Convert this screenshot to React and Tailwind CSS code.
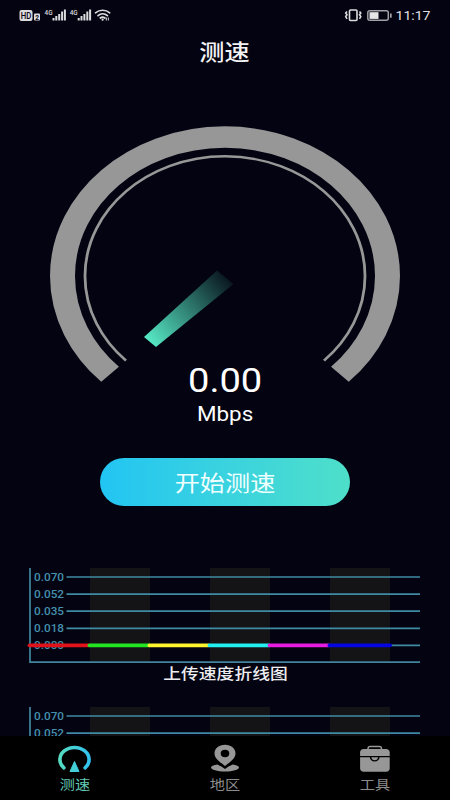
const segments = [
  { x1: 30, x2: 89, color: "#e0121a" },
  { x1: 90, x2: 149, color: "#22e622" },
  { x1: 150, x2: 209, color: "#fff42e" },
  { x1: 210, x2: 269, color: "#22f0f0" },
  { x1: 270, x2: 329, color: "#e61ce0" },
  { x1: 330, x2: 390, color: "#0505e0" },
];

const ticks = ["0.070", "0.052", "0.035", "0.018", "0.000"];

function SignalBars({ x }) {
  return (
    <g fill="#dcdcdf">
      <text x={x} y="14.500" fontSize="7.500" fontWeight="500" textLength="8" lengthAdjust="spacingAndGlyphs">4G</text>
      <rect x={x + 8} y="18" width="2" height="2.5" />
      <rect x={x + 10.8} y="16" width="2" height="4.5" />
      <rect x={x + 13.7} y="14" width="2" height="6.5" />
      <rect x={x + 16.6} y="11.5" width="2" height="9" />
      <rect x={x + 19.4} y="9.5" width="2" height="11" />
    </g>
  );
}

function StatusBar() {
  return (
    <div className="h-[30px] shrink-0">
      <svg width="450" height="30" viewBox="0 0 450 30" fontFamily="Roboto, sans-serif">
        <rect x="19.5" y="10" width="13" height="11" rx="2" fill="#dcdcdf" />
        <text x="20.7" y="18.5" fontSize="8.5" fontWeight="500" fill="#050512" textLength="10.6" lengthAdjust="spacingAndGlyphs">HD</text>
        <rect x="34" y="13.5" width="6" height="7" rx="1" fill="#dcdcdf" />
        <text x="35.2" y="19.6" fontSize="6.5" fontWeight="700" fill="#050512">2</text>
        <SignalBars x={44.5} />
        <SignalBars x={69.7} />
        <g fill="none" stroke="#dcdcdf" strokeWidth="1.7" strokeLinecap="round">
          <path d="M95.5 12.8c4-3.4 10.3-3.4 14.2 0" />
          <path d="M98 15.6c2.7-2.3 6.7-2.3 9.4 0" />
          <path d="M100.3 18c1.4-1.2 3.2-1.2 4.6 0" />
        </g>
        <circle cx="102.6" cy="19.7" r="1.1" fill="#dcdcdf" />
        <path d="M106.3 17.5v3M108.3 17.5v3" stroke="#dcdcdf" strokeWidth="1" />
        <g fill="none" stroke="#dcdcdf" strokeWidth="1.6">
          <rect x="349.5" y="10" width="7.5" height="10.5" rx="1" />
          <path d="M347 11.500l-1.3 1.5 1.3 1.8-1.3 1.8 1.3 2.2M359.5 11.500l1.3 1.5-1.3 1.8 1.3 1.8-1.3 2.2" />
        </g>
        <rect x="367.8" y="10.8" width="20.5" height="9.5" rx="2" fill="none" stroke="#a0a0a6" strokeWidth="1.5" />
        <rect x="369.5" y="12.2" width="9" height="6.7" fill="#e6e6e8" />
        <path d="M390 13.500h1.7v4.200h-1.7z" fill="#a0a0a6" />
        <text x="395.5" y="20" fontSize="13.500" fill="#e0e0e3" textLength="35" lengthAdjust="spacingAndGlyphs">11:17</text>
      </svg>
    </div>
  );
}

function Gauge() {
  return (
    <svg className="shrink-0" width="350" height="262" viewBox="50 124 350 262">
      <defs>
        <linearGradient id="needle" gradientUnits="userSpaceOnUse" x1="150" y1="342" x2="228" y2="278">
          <stop offset="0" stopColor="#56e8c4" />
          <stop offset="1" stopColor="#56e8c4" stopOpacity="0.08" />
        </linearGradient>
      </defs>
      <g transform="translate(225 276) scale(1 0.855)" fill="none" stroke="#979797">
        <path d="M-114.9 114.9A162.5 162.5 0 1 1 114.9 114.9" strokeWidth="25" />
        <path d="M-99 99A140 140 0 1 1 99 99" strokeWidth="2.8" />
      </g>
      <path d="M144 337L156 347L233.5 284L217 270.5Z" fill="url(#needle)" />
    </svg>
  );
}

function SpeedChart({ title }) {
  return (
    <div className="flex h-[139px] shrink-0 flex-col items-center">
      <svg className="shrink-0" width="450" height="96" viewBox="0 0 450 96">
        {[90, 210, 330].map((x) => (
          <rect key={x} x={x} y="0" width="60" height="93" fill="#141417" />
        ))}
        <path d="M30 0V94.2H420" fill="none" stroke="#41869d" strokeWidth="1.7" />
        {ticks.map((tick, i) => (
          <g key={tick}>
            <path d={`M${i === 4 ? 30 : 66.5} ${9 + i * 17.1}H420`} stroke="#3f8ba3" strokeWidth="1.7" />
            <text
              x="34"
              y={13 + i * 17.1}
              fontSize="11.5"
              fontWeight="500"
              fontFamily="Roboto, sans-serif"
              fill="#4590ad"
              textLength="30"
              lengthAdjust="spacingAndGlyphs"
            >
              {tick}
            </text>
          </g>
        ))}
        {segments.map((s) => (
          <path key={s.x1} d={`M${s.x1 - 0.5} 77.3H${s.x2}`} stroke={s.color} strokeWidth="3.8" strokeLinecap="round" />
        ))}
      </svg>
      <p className="ml-[2px] scale-x-[1.185] text-[15px] font-medium leading-[21px] text-[#ededf0]">{title}</p>
    </div>
  );
}

function SpeedIcon() {
  return (
    <svg width="36" height="30" viewBox="57 744 36 30">
      <defs>
        <linearGradient id="speed" x1="58" y1="0" x2="91" y2="0" gradientUnits="userSpaceOnUse">
          <stop offset="0" stopColor="#58dcc0" />
          <stop offset="1" stopColor="#2fc0f0" />
        </linearGradient>
      </defs>
      <path d="M63.9 767.9A14.6 12.1 0 1 1 85.1 767.9" fill="none" stroke="url(#speed)" strokeWidth="3.6" strokeLinecap="round" />
      <path d="M74.5 761.5L79 771.5H70Z" fill="url(#speed)" stroke="url(#speed)" strokeLinejoin="round" />
    </svg>
  );
}

function RegionIcon() {
  return (
    <svg width="36" height="30" viewBox="207 744 36 30" fill="#979797">
      <path fillRule="evenodd" d="M225 744.8c-6.200 0-10.5 3.7-10.5 8.600 0 5.2 6 8.800 10.500 12.600 4.500-3.800 10.500-7.400 10.500-12.600 0-4.900-4.300-8.600-10.500-8.600zm0 5a4.300 3.700 0 1 1 0 7.400 4.300 3.700 0 1 1 0-7.400z" />
      <path d="M217.5 764.500c-4 .5-6.500 1.700-6.500 3.100 0 2.300 6.200 4 14 4s14-1.700 14-4c0-1.400-2.500-2.600-6.500-3.100-2.200 1.200-4.500 2.200-7.500 4.400-3-2.200-5.300-3.200-7.500-4.400z" />
    </svg>
  );
}

function ToolsIcon() {
  return (
    <svg width="36" height="30" viewBox="357 744 36 30" fill="#979797">
      <path d="M368 749v-.3c0-1.300.9-2.200 2.200-2.200h9.100c1.300 0 2.200.9 2.200 2.200v.3" fill="none" stroke="#979797" strokeWidth="1.500" />
      <path d="M363.500 749h22.500c2.300 0 3.700 1.300 3.700 3.200v3.900h-29.600v-3.900c0-1.900 1.300-3.200 3.400-3.200z" />
      <path d="M360.100 757.300h9.700c.3 2.600 2 4.200 4.900 4.200s4.600-1.600 4.900-4.200h10.100v11.200c0 1.900-1.400 3.200-3.500 3.200h-22.600c-2.100 0-3.500-1.300-3.500-3.200z" />
      <path d="M371.300 757.300h6.800c-.3 1.900-1.400 2.900-3.400 2.900s-3.100-1-3.400-2.900z" />
    </svg>
  );
}

const tabs = [
  { label: "测速", Icon: SpeedIcon, color: "text-[#62c8b2]" },
  { label: "地区", Icon: RegionIcon, color: "text-[#8c8c8c]" },
  { label: "工具", Icon: ToolsIcon, color: "text-[#8c8c8c]" },
];

export default function App() {
  return (
    <div className="flex h-[800px] w-[450px] flex-col overflow-hidden bg-[#030311] font-[Roboto,'Noto_Sans_CJK_SC',sans-serif]">
      <StatusBar />
      <main className="flex min-h-0 flex-1 flex-col items-center overflow-hidden">
        <h1 className="h-[94px] shrink-0 scale-x-[1.17] pt-[8px] text-[21.5px] font-medium leading-[30px] text-[#f2f2f4]">测速</h1>
        <Gauge />
        <div className="-mt-[26px] flex shrink-0 flex-col items-center text-white">
          <span className="scale-x-[1.12] text-[34px] leading-[40px]">0.00</span>
          <span className="scale-x-[1.12] text-[20px] leading-[28px]">Mbps</span>
        </div>
        <button className="mt-[30px] h-12 w-[250px] shrink-0 rounded-full bg-linear-to-r from-[#22c5f3] to-[#4edfc9] text-[#f0ffff]">
          <span className="inline-block scale-x-[1.17] pt-[3px] text-[21.5px] leading-[45px]">开始测速</span>
        </button>
        <div className="mt-[62px] flex flex-col">
          <SpeedChart title="上传速度折线图" />
          <SpeedChart title="下载速度折线图" />
        </div>
      </main>
      <nav className="grid h-16 shrink-0 grid-cols-3 bg-black">
        {tabs.map(({ label, Icon, color }) => (
          <div key={label} className="flex flex-col items-center pt-2">
            <Icon />
            <span className={`mt-px scale-x-[1.17] text-[13px] leading-[20px] ${color}`}>{label}</span>
          </div>
        ))}
      </nav>
    </div>
  );
}
